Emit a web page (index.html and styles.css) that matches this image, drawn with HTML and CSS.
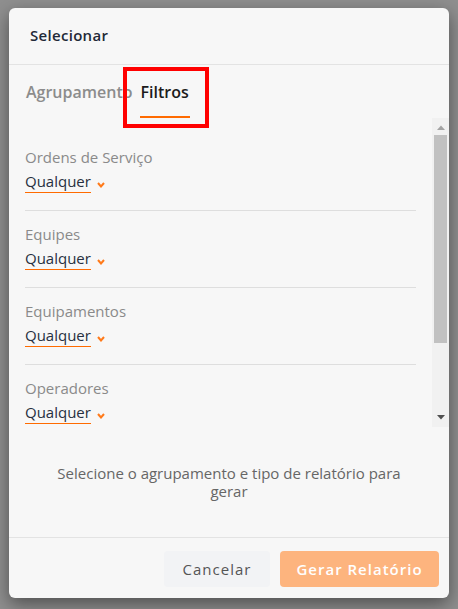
FILE: index.html
```html
<!DOCTYPE html>
<html lang="pt-BR">
<head>
<meta charset="utf-8">
<title>Selecionar</title>
<link rel="stylesheet" href="styles.css">
</head>
<body>
<div class="modal">
  <div class="modal-header">Selecionar</div>
  <div class="tabs">
    <div class="tab">Agrupamento</div>
    <div class="tab active">Filtros</div>
    <div class="highlight"></div>
  </div>
  <div class="filter-area">
    <div class="filters">
      <div class="filter">
        <div class="filter-label">Ordens de Serviço</div>
        <div class="select"><span class="select-value">Qualquer</span><svg class="chev" width="8" height="6" viewBox="0 0 8 6"><polyline points="1,1 4,4.5 7,1" fill="none" stroke="#ff7a1a" stroke-width="2"/></svg></div>
      </div>
      <div class="filter">
        <div class="filter-label">Equipes</div>
        <div class="select"><span class="select-value">Qualquer</span><svg class="chev" width="8" height="6" viewBox="0 0 8 6"><polyline points="1,1 4,4.5 7,1" fill="none" stroke="#ff7a1a" stroke-width="2"/></svg></div>
      </div>
      <div class="filter">
        <div class="filter-label">Equipamentos</div>
        <div class="select"><span class="select-value">Qualquer</span><svg class="chev" width="8" height="6" viewBox="0 0 8 6"><polyline points="1,1 4,4.5 7,1" fill="none" stroke="#ff7a1a" stroke-width="2"/></svg></div>
      </div>
      <div class="filter">
        <div class="filter-label">Operadores</div>
        <div class="select"><span class="select-value">Qualquer</span><svg class="chev" width="8" height="6" viewBox="0 0 8 6"><polyline points="1,1 4,4.5 7,1" fill="none" stroke="#ff7a1a" stroke-width="2"/></svg></div>
      </div>
    </div>
    <div class="scrollbar">
      <div class="sb-btn"><svg width="8" height="5" viewBox="0 0 8 5"><polygon points="0,5 4,0.5 8,5" fill="#a3a3a3"/></svg></div>
      <div class="sb-thumb"></div>
      <div class="sb-space"></div>
      <div class="sb-btn down"><svg width="8" height="5" viewBox="0 0 8 5"><polygon points="0,0 8,0 4,4.5" fill="#505050"/></svg></div>
    </div>
  </div>
  <div class="message">Selecione o agrupamento e tipo de relatório para gerar</div>
  <div class="footer">
    <button class="btn btn-cancel">Cancelar</button>
    <button class="btn btn-primary">Gerar Relatório</button>
  </div>
</div>
</body>
</html>
```
FILE: styles.css
```css
* { box-sizing: border-box; }
html, body { height: 100%; }
body {
  margin: 0;
  padding: 8px 9px;
  background: #8f8f8f;
  font-family: "Open Sans", "Noto Sans", sans-serif;
}
.modal {
  width: 440px;
  height: 590px;
  background: #f7f7f7;
  border-radius: 6px;
  box-shadow: 0 6px 18px rgba(0,0,0,0.45);
  display: flex;
  flex-direction: column;
  overflow: hidden;
}
.modal-header {
  padding: 17px 21px 19px;
  font-size: 15px;
  line-height: 20px;
  font-weight: 600;
  letter-spacing: 0.3px;
  color: #1f2937;
  border-bottom: 1px solid #e3e3e3;
}
.tabs {
  position: relative;
  display: flex;
  gap: 6px;
  padding: 0 16px;
}
.tab {
  padding: 17px 1px 14px;
  font-size: 16px;
  line-height: 20px;
  font-weight: 600;
  color: #8c8c8c;
  border-bottom: 2px solid transparent;
}
.tab.active {
  color: #1c1c1c;
  border-bottom-color: #ff6b00;
}
.highlight {
  position: absolute;
  left: 114px;
  top: 2px;
  width: 86px;
  height: 61px;
  border: 4px solid #ff0000;
}
.filter-area {
  display: flex;
  height: 309px;
}
.filters {
  flex: 1;
  overflow: hidden;
  padding: 15px 16px 0;
}
.filter {
  padding: 13px 0 17px;
  border-bottom: 1px solid #dedede;
}
.filter:first-child { padding-top: 14px; }
.filter-label {
  font-size: 15px;
  line-height: 20px;
  color: #8a8a8a;
}
.select {
  display: flex;
  align-items: center;
  gap: 6px;
  margin-top: 4px;
}
.select-value {
  font-size: 15px;
  line-height: 21px;
  color: #27303f;
  border-bottom: 1px solid #ff6b00;
}
.chev { margin-top: 6px; }
.scrollbar {
  width: 17px;
  background: #f1f1f1;
  display: flex;
  flex-direction: column;
}
.sb-btn {
  height: 16px;
  display: flex;
  align-items: center;
  justify-content: center;
  padding-top: 2px;
}
.sb-btn.down {
  padding-top: 0;
  padding-bottom: 4px;
}
.sb-thumb {
  height: 208px;
  margin: 1px 2px 0;
  background: #c1c1c1;
}
.sb-space { flex: 1; }
.message {
  padding: 37px 40px;
  text-align: center;
  font-size: 15px;
  line-height: 18px;
  color: #666666;
  border-bottom: 1px solid #e3e3e3;
}
.footer {
  flex: 1;
  display: flex;
  justify-content: flex-end;
  align-items: flex-start;
  gap: 10px;
  padding: 13px 10px 0;
}
.btn {
  height: 36px;
  border: none;
  border-radius: 4px;
  font-family: inherit;
  font-size: 15px;
  letter-spacing: 1px;
}
.btn-cancel {
  width: 106px;
  background: #f2f3f5;
  color: #555555;
}
.btn-primary {
  width: 159px;
  background: #fdb47e;
  color: #ffffff;
  font-weight: 600;
}
```
